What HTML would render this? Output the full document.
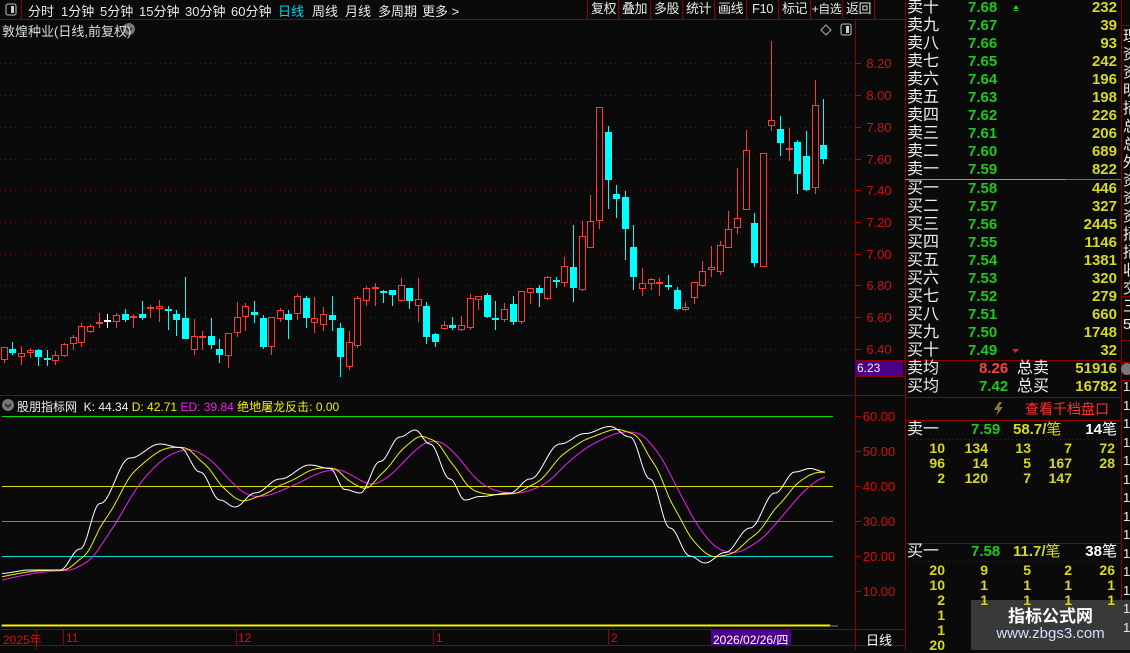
<!DOCTYPE html>
<html><head><meta charset="utf-8">
<style>
*{margin:0;padding:0;box-sizing:border-box}
body{width:1130px;height:650px;background:#0a0a0a;overflow:hidden;position:relative;font-family:"Liberation Sans","Noto Sans CJK SC",sans-serif;color:#ddd}
.a{position:absolute;white-space:nowrap}
.top{font-size:13px;color:#e8e8e8;top:1px}
.btn{position:absolute;top:0;height:19px;border-left:1px solid #8b0000;font-size:13px;color:#e8e8e8;text-align:center;line-height:18px;white-space:nowrap;overflow:hidden;letter-spacing:-0.5px}
.ob{position:absolute;left:905px;width:216px;font-size:14px}
.ob div{position:absolute;height:18px;line-height:18px;width:216px}
.l{position:absolute;left:2px;color:#eee;font-size:16px}
.p{position:absolute;left:63px;color:#1ec81e;font-weight:bold;font-size:15px}
.v{position:absolute;right:4px;color:#d8d820;font-weight:bold;font-size:15px}
.y{color:#d8d820;font-weight:bold;font-size:14px;position:absolute;text-align:right}
.ax{position:absolute;left:858px;width:42px;text-align:center;color:#d01010;font-size:13px}
</style></head><body>
<svg width="1130" height="650" style="position:absolute;left:0;top:0" id="sv">
<line x1="0" y1="19.5" x2="905" y2="19.5" stroke="#8b0000"/>
<line x1="855.5" y1="19" x2="855.5" y2="650" stroke="#8b0000"/>
<line x1="905.5" y1="0" x2="905.5" y2="650" stroke="#8b0000"/>
<line x1="1121.5" y1="0" x2="1121.5" y2="650" stroke="#8b0000"/>
<line x1="1121" y1="25.5" x2="1130" y2="25.5" stroke="#8b0000"/>
<line x1="0" y1="395.5" x2="905" y2="395.5" stroke="#8b0000"/>
<line x1="0" y1="629.5" x2="905" y2="629.5" stroke="#8b0000"/>
<line x1="0" y1="645.5" x2="905" y2="645.5" stroke="#8b0000"/>
<line x1="855" y1="360.5" x2="1121" y2="360.5" stroke="#8b0000"/>
<line x1="855" y1="376.5" x2="905" y2="376.5" stroke="#8b0000"/>
<line x1="905" y1="179.5" x2="1066" y2="179.5" stroke="#c8902a"/>
<line x1="1066" y1="179.5" x2="1121" y2="179.5" stroke="#3a7ac8"/>
<line x1="905" y1="397.5" x2="1121" y2="397.5" stroke="#8b0000"/>
<line x1="905" y1="420.5" x2="1121" y2="420.5" stroke="#8b0000"/>
<line x1="905" y1="543.5" x2="1121" y2="543.5" stroke="#8b0000"/>
<line x1="908" y1="439.5" x2="1118" y2="439.5" stroke="#8b0000" stroke-dasharray="1,3"/>
<line x1="908" y1="561.5" x2="1118" y2="561.5" stroke="#8b0000" stroke-dasharray="1,3"/>
<line x1="1121" y1="296.5" x2="1130" y2="296.5" stroke="#8b0000"/>
<line x1="1121" y1="340.5" x2="1130" y2="340.5" stroke="#8b0000"/>
<line x1="1121" y1="362.5" x2="1130" y2="362.5" stroke="#8b0000"/>
<line x1="1121" y1="380.5" x2="1130" y2="380.5" stroke="#8b0000"/>
<g stroke="#6a1010" stroke-dasharray="1,4">
<line x1="0" y1="63.5" x2="855" y2="63.5"/><line x1="0" y1="95.5" x2="855" y2="95.5"/><line x1="0" y1="127.5" x2="855" y2="127.5"/><line x1="0" y1="159.5" x2="855" y2="159.5"/><line x1="0" y1="190.5" x2="855" y2="190.5"/><line x1="0" y1="222.5" x2="855" y2="222.5"/><line x1="0" y1="254.5" x2="855" y2="254.5"/><line x1="0" y1="285.5" x2="855" y2="285.5"/><line x1="0" y1="317.5" x2="855" y2="317.5"/><line x1="0" y1="349.5" x2="855" y2="349.5"/>
</g>
<g stroke="#b00" >
<line x1="855" y1="63.5" x2="861" y2="63.5"/><line x1="855" y1="95.5" x2="861" y2="95.5"/><line x1="855" y1="127.5" x2="861" y2="127.5"/><line x1="855" y1="159.5" x2="861" y2="159.5"/><line x1="855" y1="190.5" x2="861" y2="190.5"/><line x1="855" y1="222.5" x2="861" y2="222.5"/><line x1="855" y1="254.5" x2="861" y2="254.5"/><line x1="855" y1="285.5" x2="861" y2="285.5"/><line x1="855" y1="317.5" x2="861" y2="317.5"/><line x1="855" y1="349.5" x2="861" y2="349.5"/>
<line x1="855" y1="416.5" x2="861" y2="416.5"/><line x1="855" y1="451.5" x2="861" y2="451.5"/><line x1="855" y1="486.5" x2="861" y2="486.5"/><line x1="855" y1="521.5" x2="861" y2="521.5"/><line x1="855" y1="556.5" x2="861" y2="556.5"/><line x1="855" y1="591.5" x2="861" y2="591.5"/>
</g>
<line x1="2" y1="416.5" x2="833" y2="416.5" stroke="#00dd00"/>
<line x1="2" y1="486.5" x2="833" y2="486.5" stroke="#e0e000"/>
<line x1="2" y1="521.5" x2="833" y2="521.5" stroke="#808080"/>
<line x1="2" y1="556.5" x2="833" y2="556.5" stroke="#00d8e0"/>
<line x1="1" y1="626" x2="838" y2="626" stroke="#888" stroke-width="1"/>
<line x1="2" y1="625.5" x2="830" y2="625.5" stroke="#f0f000" stroke-width="2"/>
<g id="cd"></g>
<g id="ind" fill="none" stroke-width="1"></g>
<g stroke="#8b0000"><line x1="36.5" y1="629" x2="36.5" y2="650"/><line x1="63.5" y1="629" x2="63.5" y2="645"/><line x1="236.5" y1="629" x2="236.5" y2="645"/><line x1="433.5" y1="629" x2="433.5" y2="645"/><line x1="608.5" y1="629" x2="608.5" y2="645"/></g>
<line x1="21.5" y1="0" x2="21.5" y2="19" stroke="#8b0000"/>
<path d="M826 25 L831 30 L826 35 L821 30 Z" fill="none" stroke="#aaa"/>
<rect x="841" y="24" width="10" height="11" rx="2" fill="none" stroke="#999" stroke-width="1.3"/><rect x="846" y="26" width="3" height="7" fill="#ccc"/>
<rect x="6" y="4" width="10" height="11" rx="2" fill="none" stroke="#999" stroke-width="1.3"/><rect x="11" y="6" width="3" height="7" fill="#ccc"/>
<circle cx="129" cy="29" r="6" fill="#777"/><path d="M126 28 L129 31 L132 28" stroke="#222" fill="none" stroke-width="1.5"/>
<circle cx="8" cy="405" r="6" fill="#777"/><path d="M5 404 L8 407 L11 404" stroke="#222" fill="none" stroke-width="1.5"/>
<circle cx="1127" cy="369" r="6" fill="#777"/>
<path d="M999 402 L994 410 L998 410 L996 416 L1003 407 L999 407 L1002 402 Z" fill="#8a7a30"/>
<path d="M1013 9 L1016 5 L1019 9 Z M1014 10 h4 v1 h-4z" fill="#1ec81e"/>
<path d="M1012 349 L1019 349 L1015.5 353 Z" fill="#e02020"/>
<rect x="855" y="361" width="48" height="15" fill="#4a0088"/>
<rect x="711" y="630" width="80" height="15" fill="#4a0088"/>
<rect x="971" y="600" width="159" height="50" fill="#3c3c3c" opacity="0.95"/>
</svg>

<div class="a top" style="left:28px">分时</div>
<div class="a top" style="left:61px">1分钟</div>
<div class="a top" style="left:100px">5分钟</div>
<div class="a top" style="left:139px">15分钟</div>
<div class="a top" style="left:185px">30分钟</div>
<div class="a top" style="left:231px">60分钟</div>
<div class="a top" style="left:278px;color:#00d8f0">日线</div>
<div class="a top" style="left:312px">周线</div>
<div class="a top" style="left:345px">月线</div>
<div class="a top" style="left:378px">多周期</div>
<div class="a top" style="left:422px">更多 &gt;</div>
<div class="btn" style="left:587px;width:32px">复权</div>
<div class="btn" style="left:618px;width:32px">叠加</div>
<div class="btn" style="left:650px;width:32px">多股</div>
<div class="btn" style="left:682px;width:32px">统计</div>
<div class="btn" style="left:714px;width:32px">画线</div>
<div class="btn" style="left:746px;width:32px">F10</div>
<div class="btn" style="left:778px;width:32px">标记</div>
<div class="btn" style="left:810px;width:32px;font-size:12px">+自选</div>
<div class="btn" style="left:842px;width:33px;border-right:1px solid #8b0000">返回</div>
<div class="a" style="left:2px;top:21px;font-size:13px;color:#ddd">敦煌种业(日线,前复权)</div>

<div class="ax" style="top:56px">8.20</div><div class="ax" style="top:88px">8.00</div><div class="ax" style="top:120px">7.80</div><div class="ax" style="top:152px">7.60</div><div class="ax" style="top:183px">7.40</div><div class="ax" style="top:215px">7.20</div><div class="ax" style="top:247px">7.00</div><div class="ax" style="top:278px">6.80</div><div class="ax" style="top:310px">6.60</div><div class="ax" style="top:342px">6.40</div>
<div class="a" style="left:857px;top:361px;font-size:12px;color:#eee">6.23</div>
<div class="ax" style="top:409px">60.00</div><div class="ax" style="top:444px">50.00</div><div class="ax" style="top:479px">40.00</div><div class="ax" style="top:514px">30.00</div><div class="ax" style="top:549px">20.00</div><div class="ax" style="top:584px">10.00</div>

<div class="a" style="left:17px;top:398px;font-size:12px;color:#eee">股朋指标网 &nbsp;K: 44.34 <span style="color:#f0f000">D: 42.71</span> <span style="color:#f020f0">ED: 39.84</span> <span style="color:#f0f000">绝地屠龙反击: 0.00</span></div>

<div class="a" style="left:3px;top:631px;font-size:12px;color:#d01010">2025年</div>
<div class="a" style="left:66px;top:631px;font-size:12px;color:#d01010">11</div>
<div class="a" style="left:238px;top:631px;font-size:12px;color:#d01010">12</div>
<div class="a" style="left:436px;top:631px;font-size:12px;color:#d01010">1</div>
<div class="a" style="left:611px;top:631px;font-size:12px;color:#d01010">2</div>
<div class="a" style="left:713px;top:631px;font-size:12px;color:#fff">2026/02/26/四</div>
<div class="a" style="left:866px;top:630px;font-size:13px;color:#fff">日线</div>

<div class="ob" id="ob"></div>
<div class="ob" style="top:0">
<div style="top:360px"><span class="l">卖均</span><span class="p" style="left:74px;color:#ff4040">8.26</span><span class="l" style="left:112px">总卖</span><span class="v">51916</span></div>
<div style="top:378px"><span class="l">买均</span><span class="p" style="left:74px">7.42</span><span class="l" style="left:112px">总买</span><span class="v">16782</span></div>
<div style="top:400px"><span class="a" style="left:120px;color:#ff3030;font-size:14px">查看千档盘口</span></div>
<div style="top:421px"><span class="l">卖一</span><span class="p" style="left:66px">7.59</span><span class="p" style="left:108px;color:#d8d820;font-weight:bold">58.7/<span style="font-weight:normal">笔</span></span><span class="v" style="color:#fff">14<span style="font-weight:normal">笔</span></span></div>
<div style="top:543px"><span class="l">买一</span><span class="p" style="left:66px">7.58</span><span class="p" style="left:108px;color:#d8d820;font-weight:bold">11.7/<span style="font-weight:normal">笔</span></span><span class="v" style="color:#fff">38<span style="font-weight:normal">笔</span></span></div>
</div>
<div id="q"></div>
<div class="a" style="left:1123px;top:28px;width:7px;overflow:hidden;font-size:15px;line-height:18px;color:#eee;white-space:normal;word-break:break-all">理资资明招总总外<br>资资资招招收<br>交<br>三<br>5</div>
<div class="a" style="left:1123px;top:378px;width:7px;overflow:hidden;font-size:13px;line-height:18.5px;color:#eee;white-space:normal">1<br>1<br>1<br>1<br>1<br>1<br>1<br>1<br>1<br>1<br>1<br>1<br>1<br>1</div>
<div class="a" style="left:971px;top:602px;width:159px;text-align:center;font-size:17px;font-weight:bold;color:#fff">指标公式网</div>
<div class="a" style="left:971px;top:625px;width:159px;text-align:center;font-size:15px;color:#cfe0ff">www.zbgs3.com</div>

<script>
var ob=document.getElementById('ob');
var sells=[["卖十","7.68","232"],["卖九","7.67","39"],["卖八","7.66","93"],["卖七","7.65","242"],["卖六","7.64","196"],["卖五","7.63","198"],["卖四","7.62","226"],["卖三","7.61","206"],["卖二","7.60","689"],["卖一","7.59","822"]];
var buys=[["买一","7.58","446"],["买二","7.57","327"],["买三","7.56","2445"],["买四","7.55","1146"],["买五","7.54","1381"],["买六","7.53","320"],["买七","7.52","279"],["买八","7.51","660"],["买九","7.50","1748"],["买十","7.49","32"]];
var h="";
sells.forEach(function(r,i){h+='<div style="top:'+(i*18-1)+'px"><span class="l">'+r[0]+'</span><span class="p">'+r[1]+'</span><span class="v">'+r[2]+'</span></div>';});
buys.forEach(function(r,i){h+='<div style="top:'+(180+i*18)+'px"><span class="l">'+r[0]+'</span><span class="p">'+r[1]+'</span><span class="v">'+r[2]+'</span></div>';});
ob.innerHTML=h;
var q=document.getElementById('q'),qh="";
var cols=[945,988,1031,1072,1115];
function rows(data,y0,dy){data.forEach(function(r,i){r.forEach(function(v,j){if(v==="")return;qh+='<div class="y" style="left:'+(cols[j]-50)+'px;width:50px;top:'+(y0+i*dy)+'px">'+v+'</div>';});});}
rows([["10","134","13","7","72"],["96","14","5","167","28"],["2","120","7","147",""]],440,15);
rows([["20","9","5","2","26"],["10","1","1","1","1"],["2","1","1","1","1"],["1","","","",""],["1","","","",""],["20","","","",""]],562,15);
q.innerHTML=qh;
var C=[[4,347,360,347,363,'r'],[12,349,353,342,355,'c'],[21,353,357,346,365,'r'],[30,350,353,348,358,'r'],[38,350,357,349,366,'c'],[47,358,360,350,366,'c'],[55,355,361,351,365,'r'],[64,344,356,343,357,'r'],[73,337,344,335,350,'r'],[81,326,343,323,347,'r'],[90,326,332,324,333,'r'],[99,322,323,313,328,'r'],[107,320,321,314,328,'w'],[116,315,322,313,328,'r'],[125,314,320,309,322,'c'],[133,316,318,314,328,'r'],[142,314,318,301,320,'c'],[150,307,309,305,318,'r'],[159,306,309,300,322,'r'],[168,309,311,306,330,'c'],[176,314,320,310,336,'c'],[185,318,339,277,339,'c'],[194,336,350,319,355,'r'],[202,336,338,331,350,'r'],[211,336,345,318,349,'c'],[219,349,355,339,363,'c'],[228,333,356,333,368,'r'],[237,317,333,302,337,'r'],[245,306,317,303,331,'r'],[254,312,315,301,323,'c'],[263,318,347,315,349,'c'],[271,317,347,317,355,'r'],[280,310,319,308,322,'r'],[288,314,320,310,339,'c'],[297,296,314,294,320,'r'],[306,298,318,296,328,'c'],[314,318,323,297,333,'r'],[323,314,325,307,331,'r'],[332,315,320,296,331,'c'],[340,328,357,323,377,'c'],[349,342,367,331,370,'r'],[357,298,346,296,348,'r'],[366,288,301,286,306,'r'],[375,287,289,283,306,'r'],[383,291,292,290,303,'c'],[392,290,295,290,306,'c'],[401,285,301,278,302,'r'],[409,288,301,288,309,'c'],[418,299,306,278,322,'r'],[426,306,337,302,344,'c'],[435,334,342,333,347,'c'],
[444,325,329,321,330,'r'],[452,325,328,317,330,'c'],[461,325,330,316,331,'r'],[470,298,328,294,330,'r'],[478,296,300,296,310,'r'],[487,295,317,293,318,'c'],[495,318,320,301,330,'c'],[504,309,320,303,322,'r'],[513,304,322,296,325,'c'],[521,291,322,291,324,'r'],[530,288,293,290,304,'r'],[539,288,293,285,307,'c'],[547,277,299,276,300,'r'],[556,280,281,277,288,'c'],[564,266,283,257,287,'r'],[573,267,288,225,302,'c'],[582,236,290,221,291,'r'],[590,221,248,195,248,'r'],[599,107,221,107,229,'r'],[608,132,180,126,209,'c'],[616,194,199,185,218,'c'],[625,197,229,191,260,'c'],[633,247,277,225,290,'c'],[642,283,289,268,296,'r'],[651,279,284,278,290,'r'],[659,282,283,278,296,'r'],[668,285,286,275,290,'c'],[677,290,309,287,310,'c'],[685,307,310,302,311,'r'],[694,282,298,282,304,'r'],[702,271,286,261,287,'r'],[711,267,270,246,277,'r'],[720,245,272,241,275,'r'],[728,229,248,211,248,'r'],[737,218,228,168,234,'r'],[746,150,210,130,210,'r'],[754,223,263,213,267,'c'],[763,153,267,153,267,'r'],[771,120,126,41,131,'r'],[780,129,143,116,156,'c'],[789,148,150,128,161,'r'],[797,142,174,140,194,'c'],[806,156,190,131,191,'c'],[815,105,188,80,194,'r'],[823,145,159,99,164,'c']];
var g=document.getElementById('cd'),s="";
C.forEach(function(c){var col=c[5]=='r'?'#ff3838':(c[5]=='c'?'#00ffff':'#ffffff');var x=c[0]+0.5;
 s+='<line x1="'+x+'" y1="'+c[3]+'" x2="'+x+'" y2="'+c[1]+'" stroke="'+col+'"/>';
 s+='<line x1="'+x+'" y1="'+c[2]+'" x2="'+x+'" y2="'+c[4]+'" stroke="'+col+'"/>';
 var hgt=Math.max(c[2]-c[1],1);
 if(c[5]=='r'){ if(hgt<=2) s+='<rect x="'+(c[0]-3)+'" y="'+c[1]+'" width="7" height="2" fill="'+col+'"/>'; else s+='<rect x="'+(c[0]-2.5)+'" y="'+(c[1]+0.5)+'" width="6" height="'+(hgt-1)+'" fill="#0a0a0a" stroke="'+col+'"/>';}
 else s+='<rect x="'+(c[0]-3)+'" y="'+c[1]+'" width="7" height="'+Math.max(hgt,2)+'" fill="'+col+'"/>';
});
g.innerHTML=s;
var P=[[0,15],[30,16],[60,16],[80,22],[100,35],[130,48],[160,52],[180,51],[200,44],[220,36],[235,34],[255,38],[280,42],[310,46],[330,45],[345,39],[360,38],[380,47],[400,54],[415,56],[430,52],[450,42],[465,36],[480,37],[510,38],[530,42],[560,52],[585,55],[610,57],[630,54],[650,42],[670,28],[690,20],[705,18],[725,21],[750,28],[775,38],[795,44],[810,45],[825,44]];
function K(x){for(var i=0;i<P.length-1;i++){if(x<=P[i+1][0]){var t=(x-P[i][0])/(P[i+1][0]-P[i][0]);var m=(1-Math.cos(t*Math.PI))/2;return P[i][1]+(P[i+1][1]-P[i][1])*m;}}return P[P.length-1][1];}
var a=1/14,d=14,e=13,pk="",pd="",pe="";
for(var x=2;x<=825;x++){var k=K(x);d+= a*(k-d);e+=a*(d-e);
 pk+=(x==2?'M':'L')+x+' '+(626-3.5*k).toFixed(1);
 pd+=(x==2?'M':'L')+x+' '+(626-3.5*d).toFixed(1);
 pe+=(x==2?'M':'L')+x+' '+(626-3.5*e).toFixed(1);}
document.getElementById('ind').innerHTML='<path d="'+pe+'" stroke="#f020f0"/><path d="'+pd+'" stroke="#f0f000"/><path d="'+pk+'" stroke="#ffffff"/>';
</script>
</body></html>
